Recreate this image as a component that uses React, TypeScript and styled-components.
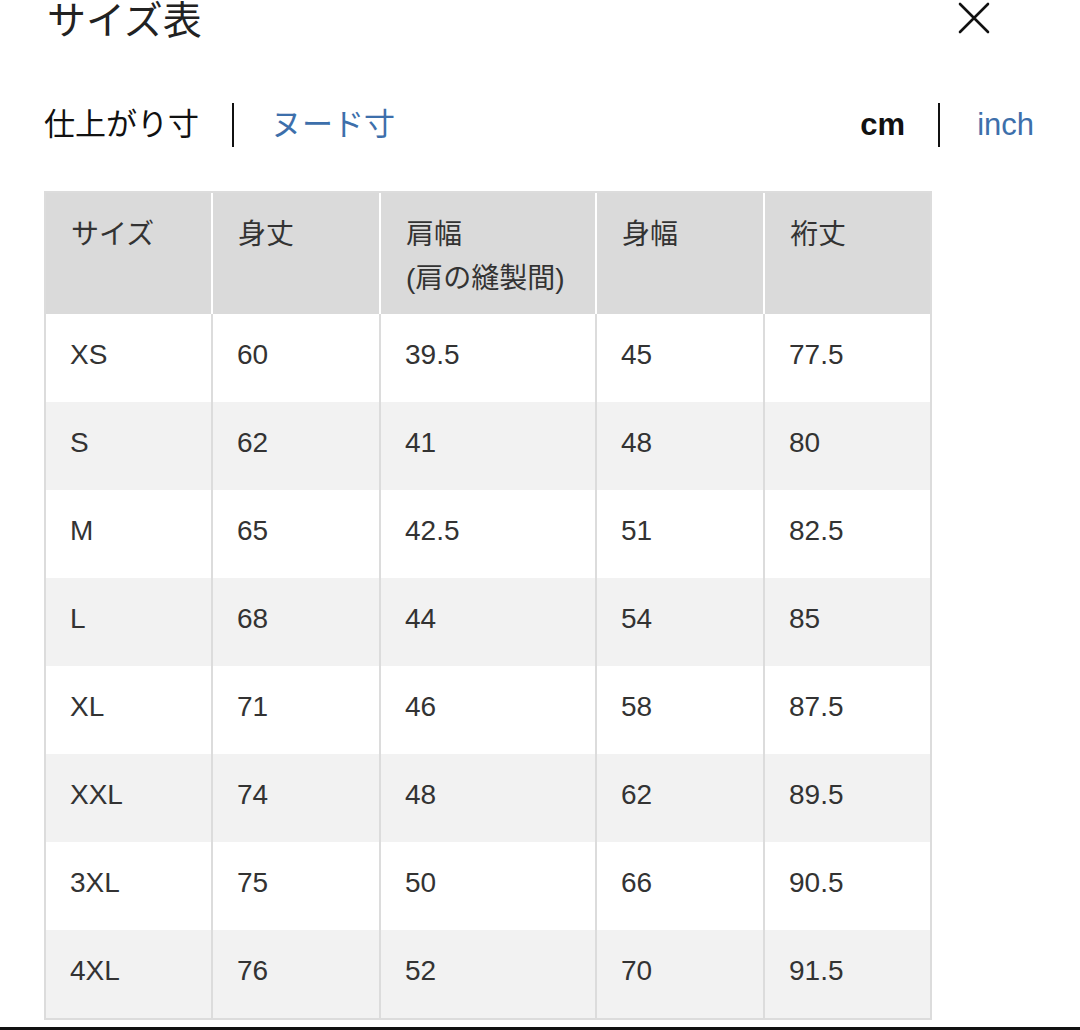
/**
* サイズ表 (size chart modal)
**/

import React, { useState } from 'react'
import styled, { createGlobalStyle } from 'styled-components'

interface rowInterface {
  size: string,
  values: Array<string>,
}

interface columnInterface {
  label: Array<string>,
  width: number,
}

const GlobalStyle = createGlobalStyle`
  *, *::before, *::after {
    box-sizing: border-box;
  }

  body {
    margin: 0;
    background: #fff;
    font-family: "Liberation Sans", "Noto Sans CJK JP", sans-serif;
    color: #222;
  }
`

const columns: Array<columnInterface> = [
  {label: ['サイズ'], width: 167},
  {label: ['身丈'], width: 168},
  {label: ['肩幅', '(肩の縫製間)'], width: 216},
  {label: ['身幅'], width: 168},
  {label: ['裄丈'], width: 165},
]

const rows: Array<rowInterface> = [
  {size: 'XS', values: ['60', '39.5', '45', '77.5']},
  {size: 'S', values: ['62', '41', '48', '80']},
  {size: 'M', values: ['65', '42.5', '51', '82.5']},
  {size: 'L', values: ['68', '44', '54', '85']},
  {size: 'XL', values: ['71', '46', '58', '87.5']},
  {size: 'XXL', values: ['74', '48', '62', '89.5']},
  {size: '3XL', values: ['75', '50', '66', '90.5']},
  {size: '4XL', values: ['76', '52', '70', '91.5']},
]

const App: React.FC = () => {
  // state
  const [fit, setFit] = useState<'product' | 'nude'>('product')
  const [unit, setUnit] = useState<'cm' | 'inch'>('cm')

  return <>
    <GlobalStyle />
    <Page>
      <Content>
        <TitleBar>
          <Title>サイズ表</Title>
          <CloseButton aria-label='閉じる'>
            <svg width='32' height='32' viewBox='0 0 32 32'>
              <path d='M2 2 L30 30 M30 2 L2 30' stroke='#111' strokeWidth='2.6' strokeLinecap='round' />
            </svg>
          </CloseButton>
        </TitleBar>

        <SwitchBar>
          <SwitchGroup>
            <SwitchItem $active={fit === 'product'} onClick={() => setFit('product')}>仕上がり寸</SwitchItem>
            <Bar />
            <SwitchItem $active={fit === 'nude'} onClick={() => setFit('nude')}>ヌード寸</SwitchItem>
          </SwitchGroup>
          <SwitchGroup>
            <SwitchItem $active={unit === 'cm'} $latin onClick={() => setUnit('cm')}>cm</SwitchItem>
            <Bar />
            <SwitchItem $active={unit === 'inch'} $latin onClick={() => setUnit('inch')}>inch</SwitchItem>
          </SwitchGroup>
        </SwitchBar>

        <SizeTable>
          <colgroup>
            {columns.map((c, i) => <col key={i} style={{width: c.width}} />)}
          </colgroup>
          <thead>
            <tr>
              {columns.map((c, i) => (
                <HeadCell key={i}>
                  {c.label.map((l, j) => <div key={j}>{l}</div>)}
                </HeadCell>
              ))}
            </tr>
          </thead>
          <tbody>
            {rows.map((r, i) => (
              <BodyRow key={r.size} $striped={i % 2 === 1}>
                <BodyCell>{r.size}</BodyCell>
                {r.values.map((v, j) => <BodyCell key={j}>{v}</BodyCell>)}
              </BodyRow>
            ))}
          </tbody>
        </SizeTable>
      </Content>
      <BottomEdge />
    </Page>
  </>
}

const Page = styled.div`
  display: flex;
  flex-direction: column;
  height: 1030px;
  overflow: hidden;
`

const Content = styled.div`
  flex: 1;
  padding: 0 46px 0 44px;
`

const TitleBar = styled.div`
  display: flex;
  justify-content: space-between;
  align-items: flex-start;
  height: 62px;
  padding: 0 44px 0 3px;
`

const Title = styled.h1`
  margin: 0;
  font-size: 39px;
  font-weight: 400;
  line-height: 42px;
  color: #222;
`

const CloseButton = styled.button`
  display: flex;
  margin-top: 2px;
  padding: 0;
  border: none;
  background: none;
  cursor: pointer;
`

const SwitchBar = styled.div`
  display: flex;
  justify-content: space-between;
  align-items: center;
  height: 48px;
  margin-top: 39px;
`

const SwitchGroup = styled.div`
  display: flex;
  align-items: center;
`

const SwitchItem = styled.span<{ $active: boolean, $latin?: boolean }>`
  font-size: ${p => p.$latin ? '31px' : '31px'};
  font-weight: ${p => p.$active && p.$latin ? 700 : 400};
  color: ${p => p.$active ? '#111' : '#3d6fab'};
  line-height: 40px;
  cursor: pointer;
`

const Bar = styled.div`
  width: 2px;
  height: 44px;
  margin: 0 37px 0 33px;

  background-color: #111;
`

const SizeTable = styled.table`
  width: 888px;
  margin-top: 42px;
  table-layout: fixed;
  border-collapse: separate;
  border-spacing: 0;
  border: 2px solid #dcdcdc;

  color: #333;
`

const HeadCell = styled.th`
  height: 121px;
  padding: 20px 10px 0 25px;
  vertical-align: top;
  text-align: left;

  font-size: 28px;
  font-weight: 400;
  line-height: 44px;

  background-color: #dadada;
  border-right: 2px solid #fff;

  &:last-child {
    border-right: none;
  }
`

const BodyRow = styled.tr<{ $striped: boolean }>`
  background-color: ${p => p.$striped ? '#f2f2f2' : '#fff'};
`

const BodyCell = styled.td`
  height: 88px;
  padding: 25px 10px 0 24px;
  vertical-align: top;

  font-size: 28px;
  line-height: 32px;

  border-right: 2px solid #dcdcdc;

  &:last-child {
    border-right: none;
  }
`

const BottomEdge = styled.div`
  height: 3px;
  background-color: #111;
`

export default App
